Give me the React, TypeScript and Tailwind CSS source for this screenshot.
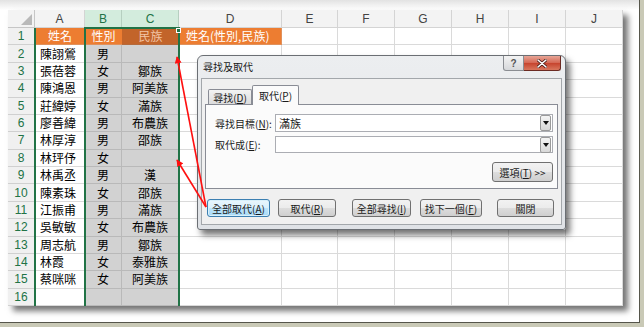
const rows: [string, string, string][] = [
  ["陳詡鶯", "男", ""],
  ["張蓓蓉", "女", "鄒族"],
  ["陳鴻恩", "男", "阿美族"],
  ["莊緯婷", "女", "滿族"],
  ["廖善緯", "男", "布農族"],
  ["林厚淳", "男", "邵族"],
  ["林玶伃", "女", ""],
  ["林禹丞", "男", "漢"],
  ["陳素珠", "女", "邵族"],
  ["江振甫", "男", "滿族"],
  ["吳敏敏", "女", "布農族"],
  ["周志航", "男", "鄒族"],
  ["林霞", "女", "泰雅族"],
  ["蔡咪咪", "女", "阿美族"],
  ["", "", ""],
];

const letters = ["A", "B", "C", "D", "E", "F", "G", "H", "I", "J"];
const blanks = [0, 1, 2, 3, 4, 5];

function Sheet() {
  return (
    <div className="relative w-[615px] h-[296px] grid grid-cols-[27px_50px_37px_57px_103px_56px_57px_57px_57px_57px_57px] grid-rows-[18px_repeat(16,17.375px)] bg-white shadow-[5px_5px_6px_rgba(0,0,0,0.55)] text-[12px] leading-none text-black">
      {/* column headers */}
      <div className="relative bg-[#f3f3f3] border-r border-b border-[#c6c6c6]">
        <div className="absolute right-[2px] bottom-[2px] w-0 h-0 border-l-[11px] border-l-transparent border-b-[11px] border-b-[#b9b9b9]" />
      </div>
      {letters.map((l) => (
        <div
          key={l}
          className={
            l === "B" || l === "C"
              ? "flex items-center justify-center bg-[#d3ecdd] border-r border-b border-[#b6cfc0] text-[#217346] font-['Liberation_Sans',sans-serif] text-[12px]"
              : "flex items-center justify-center bg-[#f3f3f3] border-r border-b border-[#d4d4d4] text-[#444] font-['Liberation_Sans',sans-serif] text-[12px]"
          }
        >
          {l}
        </div>
      ))}

      {/* row 1 */}
      <RowHead n={1} />
      <div className="flex items-center justify-center bg-[#ed7d31] text-white border-b border-[#e0915c]">姓名</div>
      <div className="flex items-center justify-center bg-[#ed7d31] text-white border-b border-[#e0915c]">性別</div>
      <div className="flex items-center justify-center bg-[#c2642a] text-[#f2c5a6] border-b border-[#b56a3c]">民族</div>
      <div className="flex items-center pl-[7px] bg-[#ed7d31] text-white border-r border-b border-[#e0915c] whitespace-nowrap">姓名(性別,民族)</div>
      {blanks.map((b) => (
        <div key={b} className="border-r border-b border-[#dadada]" />
      ))}

      {rows.map((r, i) => (
        <Row key={i} n={i + 2} name={r[0]} sex={r[1]} tribe={r[2]} />
      ))}

      {/* selection outline */}
      <div className="absolute left-[26px] top-[18px] w-[2px] h-[278px] bg-[#217346]" />
      <div className="absolute left-[76px] top-[18px] w-[2px] h-[278px] bg-[#217346]" />
      <div className="absolute left-[170px] top-[18px] w-[2px] h-[278px] bg-[#217346]" />
      <div className="absolute left-[76px] top-[17px] w-[96px] h-[2px] bg-[#217346]" />
      <div className="absolute left-[168px] top-[18px] w-[5px] h-[5px] bg-[#217346] border border-white" />
    </div>
  );
}

function RowHead({ n }: { n: number }) {
  return (
    <div className="flex items-center justify-center bg-[#f0f0f0] border-r border-b border-[#d0d0d0] text-[#217346] font-['Liberation_Sans',sans-serif] text-[12px]">
      {n}
    </div>
  );
}

function Row({ n, name, sex, tribe }: { n: number; name: string; sex: string; tribe: string }) {
  return (
    <>
      <RowHead n={n} />
      <div className="flex items-center pl-[5px] bg-white border-r border-b border-[#dadada] whitespace-nowrap">{name}</div>
      <div className="flex items-center justify-center bg-[#d2d2d2] border-r border-b border-[#b9b9b9]">{sex}</div>
      <div className="flex items-center justify-center bg-[#d2d2d2] border-r border-b border-[#b9b9b9]">{tribe}</div>
      <div className="border-r border-b border-[#dadada]" />
      {blanks.map((b) => (
        <div key={b} className="border-r border-b border-[#dadada]" />
      ))}
    </>
  );
}

function DropBtn() {
  return (
    <div className="w-[11px] h-[16px] mr-px flex items-center justify-center border border-[#9a9a9a] rounded-[2px] bg-[linear-gradient(to_bottom,#f4f4f4,#d8d8d8)]">
      <svg width="6" height="4" viewBox="0 0 6 4">
        <path d="M0 0h6L3 4z" fill="#111" />
      </svg>
    </div>
  );
}

function Btn({ w, ml, def, children }: { w: string; ml: string; def?: boolean; children: React.ReactNode }) {
  return (
    <div
      className={[
        w,
        ml,
        "h-[18px] flex items-center justify-center rounded-[3px] border text-[10px] whitespace-nowrap",
        def
          ? "border-[#3c7fb1] bg-[linear-gradient(to_bottom,#eaf6fd_0%,#d9f0fc_50%,#bee6fd_50%,#a7d9f5_100%)] shadow-[inset_0_0_0_1px_#d8f0fb]"
          : "border-[#707070] bg-[linear-gradient(to_bottom,#f2f2f2_0%,#ebebeb_50%,#dddddd_50%,#cfcfcf_100%)]",
      ].join(" ")}
    >
      {children}
    </div>
  );
}

function Dialog() {
  return (
    <div className="absolute left-[197px] top-[55px] w-[369px] h-[175px] flex flex-col rounded-t-[6px] rounded-b-[3px] border border-[#6b6f74] bg-[linear-gradient(to_bottom,#eceef0,#dfe2e6)] shadow-[4px_5px_6px_rgba(0,0,0,0.55)] text-[10px] text-[#1a1a1a]">
      <div className="h-[22px] flex items-start justify-between pl-[5px] pr-[4px]">
        <span className="mt-[3px]">尋找及取代</span>
        <div className="flex">
          <div className="w-[21px] h-[15px] flex items-center justify-center rounded-bl-[3px] border border-t-0 border-[#8a8d92] bg-[linear-gradient(to_bottom,#f3f3f3,#d6d8db)] text-[#555] font-['Liberation_Sans',sans-serif] text-[10px] font-bold">
            ?
          </div>
          <div className="w-[37px] h-[15px] flex items-center justify-center rounded-br-[3px] border border-t-0 border-l-0 border-[#6b2a22] bg-[linear-gradient(to_bottom,#e7a596_0%,#d46551_50%,#c6422c_50%,#d8775d_100%)]">
            <svg width="10" height="9" viewBox="0 0 10 9">
              <path d="M1 1l8 7M9 1L1 8" stroke="#4a1a14" strokeWidth="3" strokeLinecap="round" />
              <path d="M1 1l8 7M9 1L1 8" stroke="#ffffff" strokeWidth="1.6" strokeLinecap="round" />
            </svg>
          </div>
        </div>
      </div>

      <div className="mx-[3px] mb-[4px] flex-1 border border-[#a3a7ab] bg-[#f0f0f0] pt-[5px]">
        <div className="flex items-end pl-[6px] h-[20px]">
          <div className="w-[44px] h-[15px] flex items-center justify-center border border-b-0 border-[#898c95] rounded-t-[2px] bg-[linear-gradient(to_bottom,#f3f3f3,#dcdcdc)]">
            尋找(<u>D</u>)
          </div>
          <div className="relative z-10 -mb-px w-[47px] h-[20px] flex items-center justify-center border border-b-0 border-[#898c95] rounded-t-[2px] bg-[#fbfbfb]">
            取代(<u>P</u>)
          </div>
        </div>
        <div className="mx-[3px] h-[85px] border border-[#898c95] bg-[#fbfbfb] pt-[9px] pl-[9px] pr-[4px]">
          <div className="flex items-center h-[18px]">
            <span className="w-[60px] whitespace-nowrap">
              尋找目標(<u>N</u>):
            </span>
            <div className="flex-1 h-full flex items-center justify-between border border-[#abadb3] bg-white pl-[3px]">
              <span className="text-[11px]">滿族</span>
              <DropBtn />
            </div>
          </div>
          <div className="flex items-center h-[17px] mt-[4px]">
            <span className="w-[60px] whitespace-nowrap">
              取代成(<u>E</u>):
            </span>
            <div className="flex-1 h-full flex items-center justify-end border border-[#abadb3] bg-white">
              <DropBtn />
            </div>
          </div>
          <div className="flex justify-end mt-[9px]">
            <div className="w-[61px] h-[20px] flex items-center justify-center rounded-[3px] border border-[#707070] bg-[linear-gradient(to_bottom,#f2f2f2_0%,#ebebeb_50%,#dddddd_50%,#cfcfcf_100%)] whitespace-nowrap">
              選項(<u>T</u>) &gt;&gt;
            </div>
          </div>
        </div>
        <div className="flex mt-[10px] pl-[5px]">
          <Btn w="w-[63px]" ml="ml-0" def>
            全部取代(<u>A</u>)
          </Btn>
          <Btn w="w-[58px]" ml="ml-[8px]">
            取代(<u>R</u>)
          </Btn>
          <Btn w="w-[59px]" ml="ml-[16px]">
            全部尋找(<u>I</u>)
          </Btn>
          <Btn w="w-[62px]" ml="ml-[9px]">
            找下一個(<u>F</u>)
          </Btn>
          <Btn w="w-[57px]" ml="ml-[15px]">
            關閉
          </Btn>
        </div>
      </div>
    </div>
  );
}

function Arrows() {
  return (
    <svg className="absolute left-0 top-0 pointer-events-none" width="644" height="327" viewBox="0 0 644 327">
      <defs>
        <marker id="ah" viewBox="0 0 10 10" refX="9" refY="5" markerWidth="7" markerHeight="7" orient="auto" markerUnits="userSpaceOnUse">
          <path d="M0 0L10 5L0 10z" fill="#ff1010" />
        </marker>
      </defs>
      <line x1="206" y1="207" x2="177" y2="57" stroke="#ff1010" strokeWidth="1.6" markerEnd="url(#ah)" />
      <line x1="206" y1="207" x2="177" y2="160" stroke="#ff1010" strokeWidth="1.6" markerEnd="url(#ah)" />
    </svg>
  );
}

export default function App() {
  return (
    <div className="w-[644px] h-[327px] bg-white border-r-[4px] border-b-[4px] border-[#c9c9b6] font-['Noto_Sans_CJK_TC',sans-serif]">
      <div className="relative w-full h-full border-r border-b border-[#55554a] bg-[linear-gradient(to_bottom,#e2e2e2,#ffffff_10px)] pt-[10px] pl-[8px]">
        <Sheet />
        <Dialog />
        <Arrows />
      </div>
    </div>
  );
}
